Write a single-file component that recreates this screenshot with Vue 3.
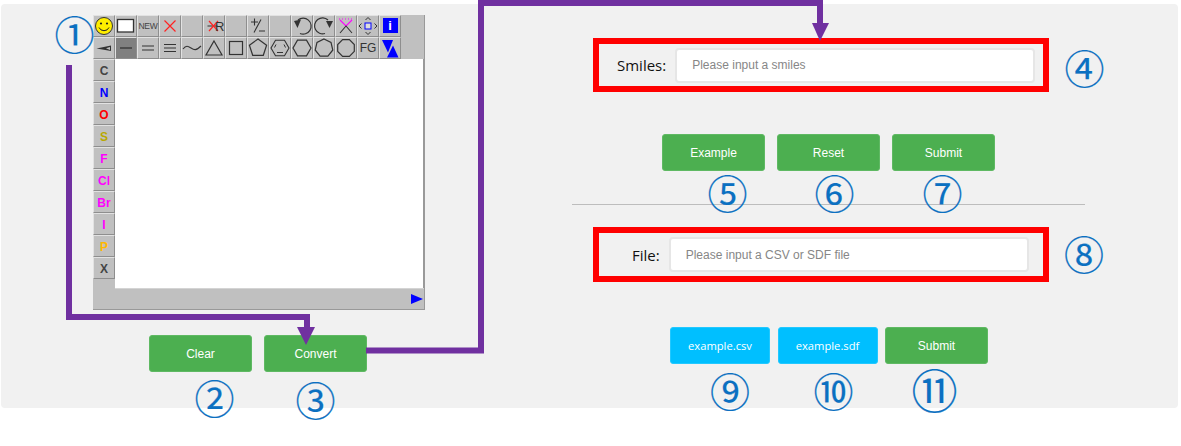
<script setup>
const elements = [
  { t: 'C', c: '#444' }, { t: 'N', c: '#0000ff' }, { t: 'O', c: '#ff0000' }, { t: 'S', c: '#b8a800' },
  { t: 'F', c: '#ff00ff' }, { t: 'Cl', c: '#ff00ff' }, { t: 'Br', c: '#ff00ff' }, { t: 'I', c: '#ff00ff' },
  { t: 'P', c: '#ffb800' }, { t: 'X', c: '#444' }
]
function ring(n, r, rot = -90) {
  return Array.from({ length: n }, (_, i) => {
    const a = ((rot + (360 * i) / n) * Math.PI) / 180
    return `${(11 + r * Math.cos(a)).toFixed(1)},${(11 + r * Math.sin(a)).toFixed(1)}`
  }).join(' ')
}
const marks = [
  { t: '①', x: 55.5, y: 13.5, s: 40 }, { t: '②', x: 195.5, y: 377.5, s: 40 }, { t: '③', x: 296.5, y: 379.5, s: 40 },
  { t: '④', x: 1065.5, y: 47.5, s: 40 }, { t: '⑤', x: 708.5, y: 172.5, s: 40 }, { t: '⑥', x: 815.5, y: 172.5, s: 40 },
  { t: '⑦', x: 923.5, y: 172.5, s: 40 }, { t: '⑧', x: 1065, y: 233.5, s: 40 }, { t: '⑨', x: 711, y: 370.5, s: 40 },
  { t: '⑩', x: 814.5, y: 370.5, s: 40 }, { t: '⑪', x: 915.5, y: 369, s: 46 }
]
</script>

<template>
  <div class="page">
    <main class="panel">
      <section class="left">
        <div class="applet">
          <div class="toolbar">
            <div class="cell"><svg viewBox="0 0 22 22"><circle cx="11" cy="11" r="8.5" fill="#ffee00" stroke="#333"/><circle cx="8" cy="8.5" r="1.1" fill="#222"/><circle cx="14" cy="8.5" r="1.1" fill="#222"/><path d="M6 12.5a5.5 5.5 0 0 0 10 0" fill="none" stroke="#222"/></svg></div>
            <div class="cell"><svg viewBox="0 0 22 22"><rect x="2.5" y="4.5" width="16" height="12.5" fill="#fff" stroke="#333" stroke-width="1.3"/></svg></div>
            <div class="cell new">NEW</div>
            <div class="cell"><svg viewBox="0 0 22 22"><path d="M5.5 5.5l11 11M16.5 5.5l-11 11" stroke="#f22" stroke-width="1.2"/></svg></div>
            <div class="cell"></div>
            <div class="cell rcell"><svg viewBox="0 0 22 22"><path d="M4.5 11h10" stroke="#333"/><path d="M6 6l9 10M15 6l-9 10" stroke="#f22" stroke-width="1.2"/></svg><span>R</span></div>
            <div class="cell"></div>
            <div class="cell"><svg viewBox="0 0 22 22"><path d="M4 7h7M7.500 3.500v7M14 4.500L7 17.500M12 16h6" stroke="#333" stroke-width="1.1" fill="none"/></svg></div>
            <div class="cell"></div>
            <div class="cell"><svg viewBox="0 0 22 22"><path d="M7 5A8 8 0 1 1 9 18.500" fill="none" stroke="#333" stroke-width="1.2"/><path d="M3 6L10 4.500L6.500 13Z" fill="#333"/></svg></div>
            <div class="cell"><svg viewBox="0 0 22 22"><path d="M15 5A8 8 0 1 0 12 18.500" fill="none" stroke="#333" stroke-width="1.2"/><path d="M13 6L20 6L16.500 13Z" fill="#333"/></svg></div>
            <div class="cell"><svg viewBox="0 0 22 22"><path d="M5 5l6 6 6-6" fill="none" stroke="#f0f" stroke-width="1.1"/><path d="M5 18l6-7 6 7" fill="none" stroke="#333" stroke-width="1.1"/><path d="M4 4h14" stroke="#f0f" stroke-dasharray="1 2"/></svg></div>
            <div class="cell"><svg viewBox="0 0 22 22"><rect x="8" y="8" width="6" height="6" fill="#ddd" stroke="#00f"/><path d="M8.500 5L11 2.500 13.500 5M8.500 17l2.500 2.500L13.500 17M4.500 8.500L2 11l2.500 2.500M17.500 8.500L20 11l-2.500 2.500" fill="none" stroke="#333"/></svg></div>
            <div class="cell info"><span>i</span></div>
            <div class="filler"></div>

            <div class="cell"><svg viewBox="0 0 22 22"><path d="M3.500 11.500L18 8.500V14Z" fill="#333"/><path d="M13 11.300L17 10V13Z" fill="#c0c0c0"/></svg></div>
            <div class="cell active"><svg viewBox="0 0 22 22"><path d="M5 11h12" stroke="#333" stroke-width="1.3"/></svg></div>
            <div class="cell"><svg viewBox="0 0 22 22"><path d="M5 9h12M5 13h12" stroke="#333" stroke-width="1.2"/></svg></div>
            <div class="cell"><svg viewBox="0 0 22 22"><path d="M5 7.500h12M5 11h12M5 14.500h12" stroke="#333" stroke-width="1.2"/></svg></div>
            <div class="cell"><svg viewBox="0 0 22 22"><path d="M2 12c3-4 5-3 8-1s5 3 10-2" fill="none" stroke="#333" stroke-width="1.1"/></svg></div>
            <div class="cell"><svg viewBox="0 0 22 22"><path d="M11 4L19 18H3Z" fill="none" stroke="#333" stroke-width="1.2"/></svg></div>
            <div class="cell"><svg viewBox="0 0 22 22"><rect x="4.500" y="4.500" width="13" height="13" fill="none" stroke="#333" stroke-width="1.2"/></svg></div>
            <div class="cell"><svg viewBox="0 0 22 22"><polygon :points="ring(5, 9)" fill="none" stroke="#333" stroke-width="1.2"/></svg></div>
            <div class="cell"><svg viewBox="0 0 22 22"><polygon :points="ring(6, 9, 0)" fill="none" stroke="#333" stroke-width="1.1"/><path d="M7 7.500L5.500 10.500M15 7.500L16.500 10.500M8 15.500H14" stroke="#333" fill="none"/></svg></div>
            <div class="cell"><svg viewBox="0 0 22 22"><polygon :points="ring(6, 9, 0)" fill="none" stroke="#333" stroke-width="1.2"/></svg></div>
            <div class="cell"><svg viewBox="0 0 22 22"><polygon :points="ring(7, 9)" fill="none" stroke="#333" stroke-width="1.2"/></svg></div>
            <div class="cell"><svg viewBox="0 0 22 22"><polygon :points="ring(8, 9, 22.5)" fill="none" stroke="#333" stroke-width="1.2"/></svg></div>
            <div class="cell fg">FG</div>
            <div class="cell"><svg viewBox="0 0 22 22"><path d="M3 3H14L9 15.500Z" fill="#00f"/><path d="M8 20.500L14 8.500L19.500 20.500Z" fill="#00f"/></svg></div>
            <div class="filler"></div>
          </div>
          <div class="work">
            <div class="side">
              <div v-for="e in elements" :key="e.t" class="cell el" :style="{ color: e.c }">{{ e.t }}</div>
            </div>
            <div class="stage">
              <div class="sheet"></div>
              <div class="bar"><svg class="play" viewBox="0 0 12 10"><path d="M0 0L12 5L0 10Z" fill="#00f"/></svg></div>
            </div>
          </div>
        </div>
        <div class="actions convert-row">
          <button class="btn">Clear</button>
          <button class="btn">Convert</button>
        </div>
      </section>

      <section class="right">
        <div class="field smiles">
          <label>Smiles:</label>
          <input placeholder="Please input a smiles" />
        </div>
        <div class="actions first-row">
          <button class="btn">Example</button>
          <button class="btn">Reset</button>
          <button class="btn">Submit</button>
        </div>
        <div class="divider"></div>
        <div class="field file">
          <label>File:</label>
          <input placeholder="Please input a CSV or SDF file" />
        </div>
        <div class="actions second-row">
          <button class="btn blue csv">example.csv</button>
          <button class="btn blue sdf">example.sdf</button>
          <button class="btn">Submit</button>
        </div>
      </section>
    </main>

    <svg class="wires" viewBox="0 0 1181 446">
      <path d="M69 65V317H307V328M366 350.500H481V3H820V24" fill="none" stroke="#7030a0" stroke-width="6"/>
      <path d="M297 327H315L306 345Z" fill="#7030a0"/>
      <path d="M812 23H829L820 41Z" fill="#7030a0"/>
    </svg>
    <span v-for="m in marks" :key="m.t" class="mark" :style="{ left: m.x + 'px', top: m.y + 'px', fontSize: m.s + 'px' }">{{ m.t }}</span>
  </div>
</template>

<style>
html, body { margin: 0; background: #fff; }
</style>

<style scoped>
.page {
  position: relative;
  width: 1181px;
  height: 446px;
  padding: 4px 0 0 1px;
  box-sizing: border-box;
  overflow: hidden;
  font-family: "Liberation Sans", Arial, sans-serif;
}
.panel {
  display: flex;
  width: 1177px;
  height: 404px;
  background: #f1f1f1;
  border-radius: 4px;
}
.left { width: 571px; flex: none; padding: 11px 0 0 92px; box-sizing: border-box; }
.right { width: 513px; flex: none; display: flex; flex-direction: column; }

.applet {
  width: 332px;
  height: 295px;
  background: #c0c0c0;
  box-sizing: border-box;
  border-bottom: 1px solid #999;
  border-right: 1px solid #999;
}
.toolbar { display: flex; flex-wrap: wrap; height: 44px; width: 331px; }
.filler { width: 23px; height: 22px; }
.cell {
  width: 22px;
  height: 22px;
  box-sizing: border-box;
  flex: none;
  position: relative;
  display: flex;
  align-items: center;
  justify-content: center;
  background: #c0c0c0;
  border-top: 1px solid #e2e2e2;
  border-left: 1px solid #e2e2e2;
  border-right: 1px solid #8e8e8e;
  border-bottom: 1px solid #8e8e8e;
  color: #333;
}
.cell svg { position: absolute; left: -1px; top: -1px; width: 22px; height: 22px; }
.active { background: #808080; }
.new { font-size: 8.500px; font-weight: 400; letter-spacing: -0.3px; color: #444; }
.fg { font-size: 12px; color: #333; }
.rcell span { position: absolute; left: 11px; top: 3px; font-size: 13px; line-height: 15px; color: #333; }
.info::before { content: ""; position: absolute; left: 3px; top: 2px; width: 15px; height: 15px; background: #0000ff; }
.info span { position: relative; top: -1px; color: #fff; font-size: 13px; font-weight: 700; }

.work { display: flex; height: 250px; }
.side { width: 22px; flex: none; }
.el { font-size: 12px; font-weight: 700; padding-top: 1px; }
.stage { flex: 1; display: flex; flex-direction: column; }
.sheet { height: 229px; background: #fff; border-right: 1px solid #999; }
.bar { flex: 1; position: relative; border-top: 1px solid #d4d4d4; }
.play { position: absolute; right: 1px; top: 5px; width: 12px; height: 10px; }

.actions { display: flex; gap: 12px; }
.convert-row { margin: 25px 0 0 56px; }
.first-row { margin: 42px 0 0 90px; }
.second-row { margin: 45px 0 0 98px; gap: 7.500px; }

.btn {
  width: 103px;
  height: 37px;
  padding: 0;
  box-sizing: border-box;
  border: 1px solid #5fb963;
  border-radius: 3px;
  background: #4caf50;
  color: #fff;
  font: 12px "Liberation Sans", Arial, sans-serif;
}
.blue { background: #00bfff; border-color: #22c8ff; font-family: "Open Sans", "Liberation Sans", sans-serif; font-size: 11.2px; }
.csv { width: 100px; }
.sdf { width: 100px; }

.field {
  width: 456px;
  margin-left: 21px;
  box-sizing: border-box;
  border: 6px solid #ff0000;
  display: flex;
  align-items: center;
}
.smiles { height: 54px; margin-top: 34px; padding: 0 8px 0 18px; }
.file { height: 55px; padding: 0 14px 0 33px; }
.field label {
  font: 15px "Open Sans", "Noto Sans", sans-serif;
  color: #111;
  white-space: nowrap;
}
.field input {
  flex: 1;
  min-width: 0;
  height: 35px;
  margin-left: 9px;
  padding: 0 15px;
  box-sizing: border-box;
  background: #fff;
  border: 2px solid #e6e6e6;
  border-radius: 4px;
  outline: none;
  font: 12px "Liberation Sans", Arial, sans-serif;
}
.field input::placeholder { color: #868686; opacity: 1; }

.divider { height: 1px; margin-top: 33px; background: #bdbdbd; }
.file { margin-top: 22px; }

.wires { position: absolute; left: 0; top: 0; width: 1181px; height: 446px; pointer-events: none; }
.mark {
  position: absolute;
  width: 38px;
  height: 38px;
  display: flex;
  align-items: center;
  justify-content: center;
  line-height: 38px;
  font-family: "Noto Sans CJK SC", "DejaVu Sans", sans-serif;
  color: #0b70c1;
  -webkit-text-stroke: 0.2px #0b70c1;
}
</style>
